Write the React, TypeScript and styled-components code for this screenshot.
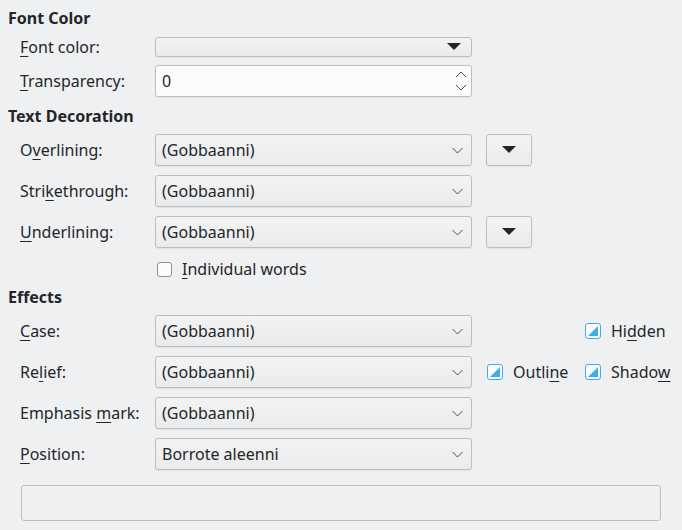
import React from "react";
import styled, { createGlobalStyle } from "styled-components";

const Global = createGlobalStyle`
  html, body { margin: 0; padding: 0; background: #eff0f1; }
  body { font-family: "Noto Sans", "DejaVu Sans", sans-serif; font-size: 16px; color: #232629; }
`;

const Page = styled.div`
  width: 682px;
  height: 530px;
  box-sizing: border-box;
  padding: 8px 0 0 8px;
  display: flex;
  flex-direction: column;
  overflow: hidden;
`;

const Heading = styled.div`
  font-weight: bold;
  height: 20px;
  line-height: 20px;
  margin-bottom: 8px;
`;

const Section = styled.div`
  display: flex;
  flex-direction: column;
  gap: 9px;
  padding-left: 12px;
  margin-bottom: 9px;
`;

const Row = styled.div<{ $h?: number }>`
  display: grid;
  grid-template-columns: 135px 317px 1fr;
  align-items: center;
  height: ${(p) => p.$h ?? 32}px;
`;

const Label = styled.span`
  white-space: nowrap;
`;

const U = styled.span`
  text-decoration: underline;
  text-underline-offset: 3px;
`;

const Combo = styled.div`
  box-sizing: border-box;
  height: 32px;
  border: 1px solid #bcbebf;
  border-radius: 3px;
  background: linear-gradient(#f3f3f4, #eaebec);
  display: flex;
  align-items: center;
  justify-content: space-between;
  padding: 0 8px 0 6px;
  box-shadow: 0 1px 1px rgba(0, 0, 0, 0.06);
`;

const ColorButton = styled(Combo)`
  height: 20px;
  padding-right: 10px;
  justify-content: flex-end;
`;

const Spin = styled(Combo)`
  background: #fcfcfc;
  padding-right: 4px;
`;

const SmallButton = styled(Combo)`
  width: 46px;
  margin-left: 14px;
  justify-content: center;
  padding: 0;
`;

const Extras = styled.div`
  display: flex;
  align-items: center;
  height: 32px;
`;

const Spacer = styled.span<{ $w: number }>`
  width: ${(p) => p.$w}px;
  flex: none;
`;

const CheckRow = styled.label<{ $w?: number }>`
  display: flex;
  align-items: center;
  gap: 10px;
  white-space: nowrap;
  width: ${(p) => (p.$w ? `${p.$w}px` : "auto")};
`;

const Box = styled.span`
  box-sizing: border-box;
  width: 15px;
  height: 15px;
  border: 1px solid #8d9194;
  border-radius: 3px;
  background: #fcfcfc;
  margin-left: 2px;
`;

const TriBox = styled.span`
  box-sizing: border-box;
  width: 16px;
  height: 16px;
  border: 1px solid #3daee9;
  border-radius: 3px;
  background: #fcfcfc;
  display: flex;
  align-items: center;
  justify-content: center;
`;

const Preview = styled.div`
  box-sizing: border-box;
  margin: 6px 0 0 13px;
  width: 640px;
  height: 36px;
  border: 1px solid #bcbebf;
  border-radius: 3px;
  background: #eff0f1;
`;

const Arrow = () => (
  <svg width="14" height="8" viewBox="0 0 14 8">
    <path d="M0 0 H14 L7 7 Z" fill="#232629" />
  </svg>
);

const Chevron = () => (
  <svg width="11" height="7" viewBox="0 0 11 7">
    <path d="M0.5 1 L5.5 6 L10.5 1" fill="none" stroke="#4d4f52" strokeWidth="1" />
  </svg>
);

const SpinArrows = () => (
  <svg width="12" height="22" viewBox="0 0 12 22">
    <path d="M1 7 L6 2 L11 7" fill="none" stroke="#4d4f52" strokeWidth="1" />
    <path d="M1 15 L6 20 L11 15" fill="none" stroke="#4d4f52" strokeWidth="1" />
  </svg>
);

const Tri = () => (
  <svg width="10" height="10" viewBox="0 0 10 10">
    <path d="M10 0 V10 H0 Z" fill="#3daee9" />
  </svg>
);

const Select = ({ value }: { value: string }) => (
  <Combo>
    <span>{value}</span>
    <Chevron />
  </Combo>
);

const Tristate = ({ children, w }: { children: React.ReactNode; w?: number }) => (
  <CheckRow $w={w}>
    <TriBox>
      <Tri />
    </TriBox>
    <span>{children}</span>
  </CheckRow>
);

export default function App() {
  return (
    <Page>
      <Global />
      <Heading>Font Color</Heading>
      <Section>
        <Row $h={20}>
          <Label>
            <U>F</U>ont color:
          </Label>
          <ColorButton>
            <Arrow />
          </ColorButton>
        </Row>
        <Row>
          <Label>
            <U>T</U>ransparency:
          </Label>
          <Spin>
            <span>0</span>
            <SpinArrows />
          </Spin>
        </Row>
      </Section>
      <Heading>Text Decoration</Heading>
      <Section>
        <Row>
          <Label>
            O<U>v</U>erlining:
          </Label>
          <Select value="(Gobbaanni)" />
          <Extras>
            <SmallButton>
              <Arrow />
            </SmallButton>
          </Extras>
        </Row>
        <Row>
          <Label>
            Stri<U>k</U>ethrough:
          </Label>
          <Select value="(Gobbaanni)" />
        </Row>
        <Row>
          <Label>
            <U>U</U>nderlining:
          </Label>
          <Select value="(Gobbaanni)" />
          <Extras>
            <SmallButton>
              <Arrow />
            </SmallButton>
          </Extras>
        </Row>
        <Row $h={20} style={{ marginTop: 1 }}>
          <span />
          <CheckRow>
            <Box />
            <span>
              <U>I</U>ndividual words
            </span>
          </CheckRow>
        </Row>
      </Section>
      <Heading>Effects</Heading>
      <Section>
        <Row>
          <Label>
            <U>C</U>ase:
          </Label>
          <Select value="(Gobbaanni)" />
          <Extras>
            <Spacer $w={113} />
            <Tristate>
              Hi<U>d</U>den
            </Tristate>
          </Extras>
        </Row>
        <Row>
          <Label>
            Re<U>l</U>ief:
          </Label>
          <Select value="(Gobbaanni)" />
          <Extras>
            <Spacer $w={15} />
            <Tristate w={98}>
              Outli<U>n</U>e
            </Tristate>
            <Tristate>
              Shado<U>w</U>
            </Tristate>
          </Extras>
        </Row>
        <Row>
          <Label>
            Emphasis <U>m</U>ark:
          </Label>
          <Select value="(Gobbaanni)" />
        </Row>
        <Row>
          <Label>
            <U>P</U>osition:
          </Label>
          <Select value="Borrote aleenni" />
        </Row>
      </Section>
      <Preview />
    </Page>
  );
}
